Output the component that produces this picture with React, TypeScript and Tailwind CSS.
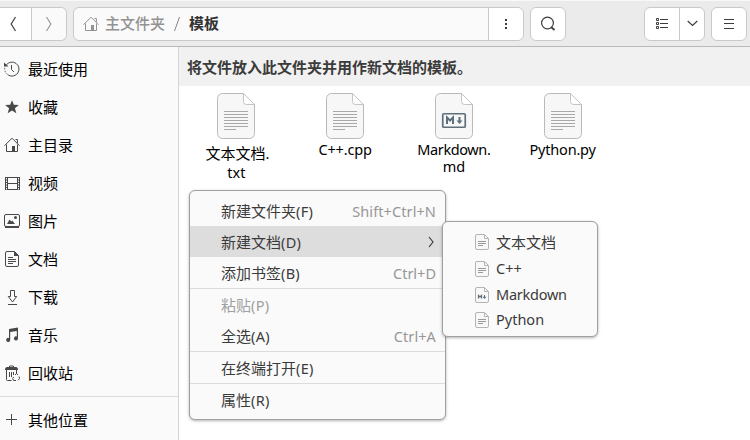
import type { ReactNode } from "react";

type IconProps = { className?: string };

/* Latin runs get their own face and size so they sit well beside the Han glyphs. */
function Latin({ children, className = "" }: { children: ReactNode; className?: string }) {
  return <span className={`font-['Noto_Sans','Open_Sans',sans-serif] text-[14.5px] ${className}`}>{children}</span>;
}

function HomeIcon({ className }: IconProps) {
  return (
    <svg width="16" height="16" viewBox="0 0 16 16" fill="none" stroke="currentColor" className={className}>
      <path d="M.5 8.7 8 1.2l7.5 7.5M2.5 7.5v7h11v-7M11.5 2.5h1.9V6" />
      <path d="M8 9h3v6H8z" fill="currentColor" stroke="none" />
    </svg>
  );
}

function RecentIcon() {
  return (
    <svg width="16" height="16" viewBox="0 0 16 16" fill="none" stroke="currentColor">
      <path d="M2.3 4A7 7 0 1 1 4.2 14" />
      <path d="M3.500 13.500A7 7 0 0 1 .8 6.500" strokeDasharray="1.500 1.500" />
      <path d="M7.5 4v4.5L10 11" />
      <path d="M0 1.5v4h4.5z" fill="currentColor" stroke="none" />
    </svg>
  );
}

function StarIcon() {
  return (
    <svg width="16" height="16" viewBox="0 0 16 16" fill="currentColor">
      <path d="M8 1.300l1.800 4.500 5.100.2-4 3.300 1.400 5L8 11.400l-4.300 2.900 1.400-5-4-3.300 5.100-.2z" />
    </svg>
  );
}

function VideoIcon() {
  return (
    <svg width="16" height="16" viewBox="0 0 16 16" fill="none" stroke="currentColor">
      <path d="M3.5 2v13M13.5 2v13M3.5 2.5h10M3.5 8.5h10M3.5 14.5h10" />
      <path d="M1.5 2v13M15.5 2v13" />
      <path d="M2.5 2v13M14.5 2v13" strokeDasharray="1 1.5" />
    </svg>
  );
}

function PictureIcon() {
  return (
    <svg width="16" height="16" viewBox="0 0 16 16" fill="none" stroke="currentColor">
      <rect x=".5" y="1.5" width="15" height="12" rx="1.5" />
      <path d="M1 14h14" strokeWidth="2" />
      <path d="M3 11l2.5-4.5 1.7 2 1-1L11 11z" fill="currentColor" stroke="none" />
      <circle cx="11.5" cy="4.500" r="1.5" fill="currentColor" stroke="none" />
    </svg>
  );
}

function DocumentIcon() {
  return (
    <svg width="16" height="16" viewBox="0 0 16 16" fill="none" stroke="currentColor">
      <path d="M3 .5h7.500l4 4V14a1.500 1.500 0 0 1-1.500 1.500H3A1.500 1.500 0 0 1 1.500 14V2A1.500 1.500 0 0 1 3 .5z" />
      <path d="M10 0v5h5z" fill="currentColor" stroke="none" />
      <path d="M4 6.500h5M4 8.500h8M4 10.500h8M4 12.500h5" />
    </svg>
  );
}

function DownloadIcon() {
  return (
    <svg width="16" height="16" viewBox="0 0 16 16" fill="none" stroke="currentColor">
      <path d="M6.500 1.500h4v6h2.200l-4.200 5.500-4.200-5.500h2.200zM4 15.500h9" />
    </svg>
  );
}

function MusicIcon() {
  return (
    <svg width="16" height="16" viewBox="0 0 16 16" fill="currentColor">
      <path d="M5 2l9-1.500v11a2 2 0 1 1-1.200-1.900V4L6.200 5v8a2 2 0 1 1-1.200-1.900z" />
    </svg>
  );
}

function TrashIcon() {
  return (
    <svg width="16" height="16" viewBox="0 0 16 16" fill="none" stroke="currentColor">
      <path d="M5.500 2.500v-1.500h4v1.500" />
      <path d="M1 5V3.500L2.500 2h10L14 3.500V5z" fill="currentColor" stroke="none" />
      <path d="M2.500 5v9.500q0 1 1 1h4M12.500 5v4M5.500 7v5M7.500 7v5M9.500 7v3" />
      <path d="M11 10l1.500-1.500L14 10M15 11.500l.6 2-1.500 1.800M12 15.500H9.500l-.8-2 1-1.500" />
    </svg>
  );
}

function PlusIcon() {
  return (
    <svg width="16" height="16" viewBox="0 0 16 16" fill="none" stroke="currentColor">
      <path d="M7.500 2v11M2 7.500h11" />
    </svg>
  );
}

function Chevron({ className = "" }: IconProps) {
  return (
    <svg width="8" height="16" viewBox="0 0 8 16" fill="none" stroke="currentColor" className={className}>
      <path d="M1.500 1l4.300 7-4.300 7" strokeWidth="1.2" />
    </svg>
  );
}

function FileIcon({ markdown = false }: { markdown?: boolean }) {
  return (
    <svg width="38" height="46" viewBox="0 0 38 46" fill="none" className="block shrink-0">
      <path d="M5.500 .5h21l11 11V40.500a5 5 0 0 1-5 5H5.500a5 5 0 0 1-5-5V5.500a5 5 0 0 1 5-5z" fill="#f7f7f7" stroke="#b9b9b9" />
      <path d="M26.500 .5l11 11h-8a3 3 0 0 1-3-3z" fill="#fff" stroke="#c4c4c4" />
      {markdown ? (
        <>
          <rect x="7.750" y="20.750" width="22.500" height="13.500" rx="1" stroke="#5e717b" strokeWidth="1.700" />
          <path d="M12 31v-6.500l3 3 3-3V31" stroke="#5e717b" strokeWidth="2" />
          <path d="M24.500 24v5" stroke="#5e717b" strokeWidth="2" />
          <path d="M21.500 27.500h6l-3 3.500z" fill="#5e717b" />
        </>
      ) : (
        <path d="M7 18.500h24M7 21.500h24M7 24.500h24M7 27.500h24M7 30.500h24M7 33.500h24M7 36.500h12" stroke="#a8a8a8" />
      )}
    </svg>
  );
}

function SmallFileIcon({ markdown = false }: { markdown?: boolean }) {
  return (
    <svg width="14" height="16" viewBox="0 0 14 16" fill="none" className="block shrink-0">
      <path d="M2 .5h7.500l4 4V14A1.500 1.500 0 0 1 12 15.500H2A1.500 1.500 0 0 1 .5 14V2A1.500 1.500 0 0 1 2 .5z" fill="#f8f8f8" stroke="#b4b4b4" />
      <path d="M9.500 .5v4h4" stroke="#b4b4b4" />
      {markdown ? (
        <>
          <path d="M3.500 11.500v-3l1.500 1.500 1.500-1.500v3" stroke="#5e717b" strokeWidth="1.200" />
          <path d="M9.500 8v3" stroke="#5e717b" />
          <path d="M7.500 9.700h4l-2 2.300z" fill="#5e717b" />
        </>
      ) : (
        <path d="M3 7.500h8M3 9.500h8M3 11.500h5" stroke="#999" />
      )}
    </svg>
  );
}

const places = [
  { label: "最近使用", icon: <RecentIcon /> },
  { label: "收藏", icon: <StarIcon /> },
  { label: "主目录", icon: <HomeIcon /> },
  { label: "视频", icon: <VideoIcon /> },
  { label: "图片", icon: <PictureIcon /> },
  { label: "文档", icon: <DocumentIcon /> },
  { label: "下载", icon: <DownloadIcon /> },
  { label: "音乐", icon: <MusicIcon /> },
  { label: "回收站", icon: <TrashIcon /> },
];

function Header() {
  return (
    <header className="flex h-[47px] shrink-0 items-center border-t border-b border-t-[#f8f8f8] border-b-[#b9b9b9] bg-[#ebebeb] pr-[3px] text-[#3d3d3d]">
      <div className="flex h-[34px] w-[67px] shrink-0 rounded-r-md border border-l-0 border-[#c9c9c9] bg-white">
        <button className="flex w-8 items-center justify-center border-r border-[#c9c9c9] pr-[5px]">
          <Chevron className="rotate-180" />
        </button>
        <button className="flex flex-1 items-center justify-center rounded-r-md bg-[#fafafa] text-[#999]">
          <Chevron />
        </button>
      </div>
      <div className="ml-1.5 flex h-[34px] w-[451px] shrink-0 rounded-md border border-[#c9c9c9] bg-[#fafafa]">
        <div className="flex flex-1 items-center pl-[9px] text-[15px] font-bold text-[#929292]">
          <HomeIcon />
          <span className="ml-1.5 font-medium">主文件夹</span>
          <svg width="8" height="16" viewBox="0 0 8 16" stroke="#858585" className="ml-2">
            <path d="M6.500 1l-5 14" />
          </svg>
          <span className="ml-2 text-[#333]">模板</span>
        </div>
        <button className="flex w-[35px] items-center justify-center rounded-r-md border-l border-[#c9c9c9] bg-white">
          <svg width="2" height="10" fill="currentColor">
            <path d="M0 0h2v2H0zM0 4h2v2H0zM0 8h2v2H0z" />
          </svg>
        </button>
      </div>
      <button className="ml-1.5 flex h-[34px] w-9 shrink-0 items-center justify-center rounded-md border border-[#c9c9c9] bg-white">
        <svg width="16" height="16" viewBox="0 0 16 16" fill="none" stroke="currentColor">
          <circle cx="7.500" cy="7" r="5.900" strokeWidth="1.200" />
          <path d="M11 11l3.500 3" strokeWidth="1.800" />
        </svg>
      </button>
      <div className="ml-auto flex h-[34px] w-[61px] shrink-0 rounded-md border border-[#c9c9c9] bg-white">
        <button className="flex w-[35px] items-center justify-center border-r border-[#c9c9c9]">
          <svg width="12" height="12" viewBox="0 0 12 12" fill="none" stroke="currentColor">
            <path d="M4 1.500h8M4 5.500h8M4 9.500h8" />
            <path d="M.5 .5h2v2h-2zM.5 4.500h2v2h-2zM.5 8.500h2v2h-2z" />
          </svg>
        </button>
        <button className="flex flex-1 items-center justify-center">
          <svg width="11" height="7" viewBox="0 0 11 7" fill="none" stroke="currentColor">
            <path d="M.7 1l4.800 4.500L10.300 1" strokeWidth="1.200" />
          </svg>
        </button>
      </div>
      <button className="ml-1.5 flex h-[34px] w-9 shrink-0 items-center justify-center rounded-md border border-[#c9c9c9] bg-white">
        <svg width="10" height="10" viewBox="0 0 10 10" stroke="currentColor">
          <path d="M0 .5h10M0 4.500h10M0 9.500h10" />
        </svg>
      </button>
    </header>
  );
}

function Sidebar() {
  return (
    <nav className="flex w-[179px] shrink-0 flex-col border-r border-[#d4d4d4] bg-[#fafafa] pt-[3px] text-[15px] text-black">
      {places.map((place) => (
        <div key={place.label} className="flex h-[38px] shrink-0 items-center gap-2 pl-1">
          <span className="text-[#484848]">{place.icon}</span>
          <span>{place.label}</span>
        </div>
      ))}
      <div className="mt-1 h-px shrink-0 bg-[#dcdcdc]" />
      <div className="mt-1 flex h-[38px] shrink-0 items-center gap-2 pl-1">
        <span className="text-[#484848]"><PlusIcon /></span>
        <span>其他位置</span>
      </div>
    </nav>
  );
}

function FileTile({ markdown, children }: { markdown?: boolean; children: ReactNode }) {
  return (
    <div className="flex flex-col items-center text-center text-[15px] text-black">
      <FileIcon markdown={markdown} />
      {children}
    </div>
  );
}

function Separator() {
  return <div className="h-px bg-[#dcdcdc]" />;
}

type MenuItemProps = { label: string; mnemonic: string; shortcut?: ReactNode; active?: boolean; disabled?: boolean };

function MenuItem({ label, mnemonic, shortcut, active, disabled }: MenuItemProps) {
  return (
    <div className={`flex h-[31px] items-center pr-[9px] pl-[31px] ${active ? "bg-[#dddddd]" : ""} ${disabled ? "text-[#a0a0a0]" : "text-[#3b3b3b]"}`}>
      <span className="pt-0.5 whitespace-nowrap">
        {label}
        <Latin className="tracking-[0.25px]">({mnemonic})</Latin>
      </span>
      <span className="ml-auto pt-px text-[#979797]">{shortcut}</span>
    </div>
  );
}

function ContextMenu() {
  return (
    <div className="absolute top-[190px] left-[189px] w-[257px] rounded-md border border-[#a0a0a0] bg-[#fafafa] py-1 text-[15px] shadow-[0_1px_3px_rgba(0,0,0,0.3)]">
      <MenuItem label="新建文件夹" mnemonic="F" shortcut={<Latin className="tracking-[0.1px]">Shift+Ctrl+N</Latin>} />
      <MenuItem label="新建文档" mnemonic="D" active shortcut={
        <svg width="8" height="12" viewBox="0 0 8 12" fill="none" stroke="#3b3b3b" className="mr-px">
          <path d="M2 1l4 5-4 5" strokeWidth="1.200" />
        </svg>
      } />
      <MenuItem label="添加书签" mnemonic="B" shortcut={<Latin>Ctrl+D</Latin>} />
      <Separator />
      <MenuItem label="粘贴" mnemonic="P" disabled />
      <MenuItem label="全选" mnemonic="A" shortcut={<Latin className="tracking-[0.1px]">Ctrl+A</Latin>} />
      <Separator />
      <MenuItem label="在终端打开" mnemonic="E" />
      <Separator />
      <MenuItem label="属性" mnemonic="R" />
    </div>
  );
}

function TemplateMenu() {
  return (
    <div className="absolute top-[221px] left-[442px] h-[116px] w-[156px] rounded-md border border-[#a0a0a0] bg-[#fafafa] pt-1 pl-8 text-[15px] text-[#3b3b3b] shadow-[0_1px_3px_rgba(0,0,0,0.3)]">
      <div className="flex h-[31px] items-center gap-[7px]"><SmallFileIcon /><span className="pt-0.5">文本文档</span></div>
      <div className="-mt-px flex h-[25px] items-center gap-[7px]"><SmallFileIcon /><Latin>C++</Latin></div>
      <div className="mt-px flex h-[25px] items-center gap-[7px]"><SmallFileIcon markdown /><Latin className="tracking-[-0.25px]">Markdown</Latin></div>
      <div className="flex h-[25px] items-center gap-[7px]"><SmallFileIcon /><Latin>Python</Latin></div>
    </div>
  );
}

export default function App() {
  return (
    <div className="relative flex h-[440px] w-[750px] flex-col overflow-hidden bg-white font-['Noto_Sans_CJK_SC',sans-serif]">
      <Header />
      <div className="flex min-h-0 flex-1">
        <Sidebar />
        <main className="flex-1">
          <div className="flex h-[39px] items-center bg-[#f1f1f1] pt-0.5 pl-2 text-[15px] font-bold text-[#3b3b3b]">
            将文件放入此文件夹并用作新文档的模板。
          </div>
          <div className="grid w-[438px] grid-cols-4 pt-[7px] pl-[3px]">
            <FileTile>
              <span className="mt-1 ml-0.5 leading-[20px]">文本文档<Latin>.</Latin></span>
              <Latin className="leading-[18px]">txt</Latin>
            </FileTile>
            <FileTile><Latin className="leading-[21px] tracking-[-0.15px]">C++.cpp</Latin></FileTile>
            <FileTile markdown>
              <Latin className="pt-0.5 leading-[17px] tracking-[-0.4px]">Markdown.</Latin>
              <Latin className="leading-[17px]">md</Latin>
            </FileTile>
            <FileTile><Latin className="leading-[21px] tracking-[-0.2px]">Python.py</Latin></FileTile>
          </div>
        </main>
      </div>
      <ContextMenu />
      <TemplateMenu />
    </div>
  );
}
